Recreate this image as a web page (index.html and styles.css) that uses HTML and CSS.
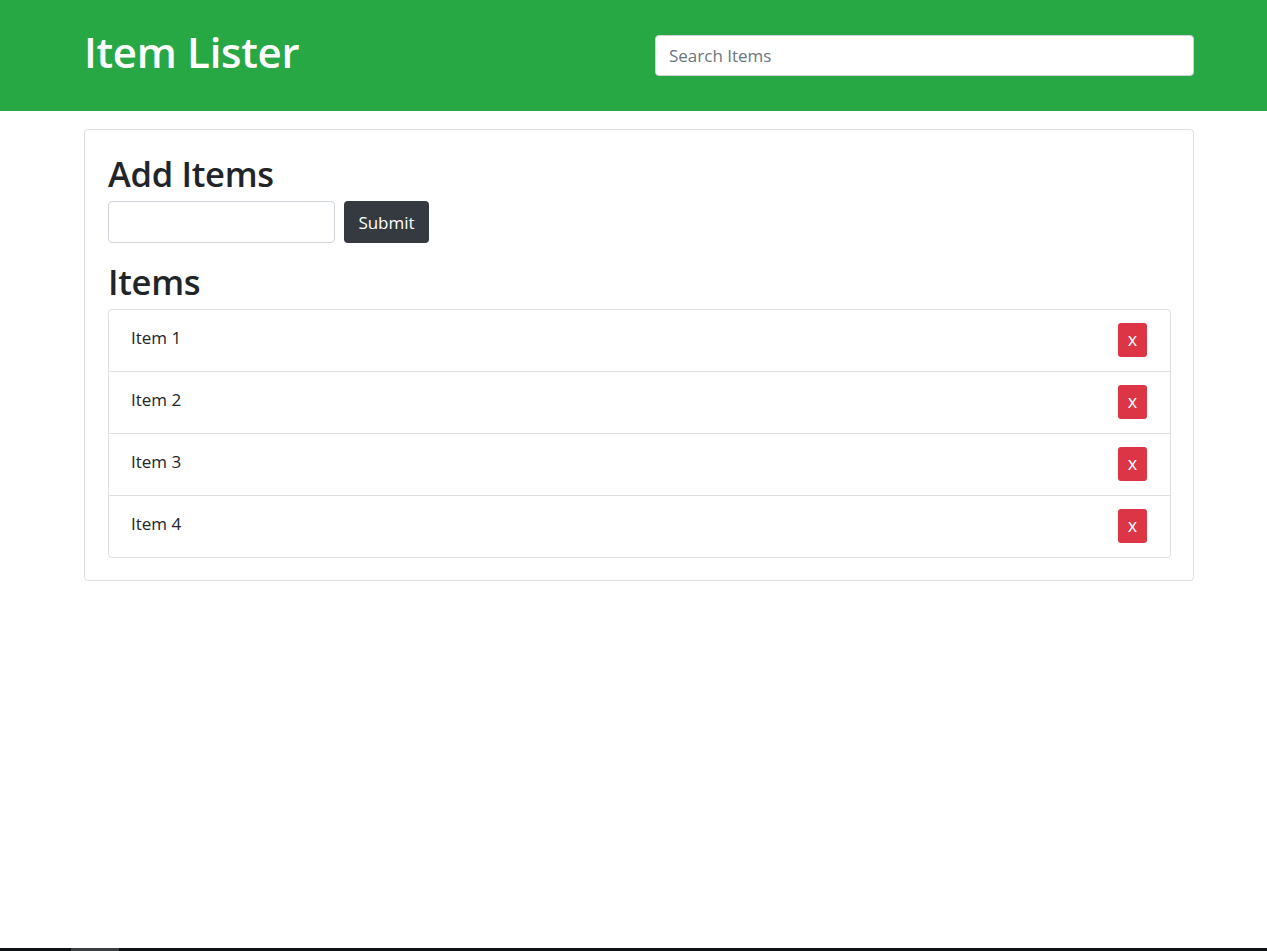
FILE: index.html
```html
<!DOCTYPE html>
<html lang="en">
<head>
<meta charset="utf-8">
<title>Item Lister</title>
<link rel="stylesheet" href="styles.css">
</head>
<body>
<header class="main-header">
  <div class="container header-row">
    <h1 class="title">Item Lister</h1>
    <input class="search" type="text" placeholder="Search Items">
  </div>
</header>
<main class="container">
  <div class="card">
    <h2 class="heading">Add Items</h2>
    <form class="add-form">
      <input class="add-input" type="text">
      <button class="btn-submit" type="button">Submit</button>
    </form>
    <h2 class="heading items-heading">Items</h2>
    <ul class="list">
      <li class="list-item"><span>Item 1</span><button class="btn-del" type="button">x</button></li>
      <li class="list-item"><span>Item 2</span><button class="btn-del" type="button">x</button></li>
      <li class="list-item"><span>Item 3</span><button class="btn-del" type="button">x</button></li>
      <li class="list-item"><span>Item 4</span><button class="btn-del" type="button">x</button></li>
    </ul>
  </div>
</main>
<div class="taskbar"><span class="taskbar-tab"></span></div>
</body>
</html>
```

FILE: styles.css
```css
* { box-sizing: border-box; }
html, body { margin: 0; padding: 0; }
body {
  font-family: "Open Sans", "Noto Sans", sans-serif;
  font-size: 17px;
  color: #212529;
  background: #fff;
}
.container {
  width: 1110px;
  margin-left: 84px;
}
.main-header {
  background: #28a745;
  height: 111px;
  padding-top: 24px;
}
.header-row {
  display: grid;
  grid-template-columns: 1fr 539px;
  align-items: start;
}
.title {
  margin: 0;
  font-size: 42px;
  font-weight: 600;
  line-height: 56px;
  color: #fff;
  letter-spacing: -0.3px;
}
.search {
  margin-top: 11px;
  height: 41px;
  width: 539px;
  border: 1px solid #ced4da;
  border-radius: 4px;
  padding: 0 13px;
  font-family: inherit;
  font-size: 17px;
  color: #495057;
  outline: none;
}
.search::placeholder { color: #6c757d; }
.card {
  margin-top: 18px;
  border: 1px solid rgba(0,0,0,.125);
  border-radius: 4px;
  padding: 23px 22px 22px 23px;
}
.heading {
  margin: 0 0 9px 0;
  padding-top: 2px;
  font-size: 34.5px;
  font-weight: 600;
  line-height: 37px;
  letter-spacing: -0.3px;
}
.add-form {
  display: flex;
  gap: 9px;
}
.add-input {
  width: 227px;
  height: 42px;
  border: 1px solid #ced4da;
  border-radius: 4px;
  outline: none;
}
.btn-submit {
  width: 85px;
  height: 42px;
  border: none;
  border-radius: 4px;
  background: #343a40;
  color: #fff;
  font-family: inherit;
  font-size: 17px;
  padding: 0;
}
.items-heading { margin-top: 18px; }
.list {
  list-style: none;
  margin: 0;
  padding: 0;
  border: 1px solid rgba(0,0,0,.125);
  border-radius: 4px;
}
.list-item {
  display: flex;
  justify-content: space-between;
  align-items: flex-start;
  height: 62px;
  padding: 13px 23px 0 22px;
  border-top: 1px solid rgba(0,0,0,.125);
}
.list-item:first-child { border-top: none; height: 61px; }
.list-item span { margin-top: 3px; }
.btn-del {
  width: 29px;
  height: 34px;
  border: none;
  border-radius: 3px;
  background: #dc3545;
  color: #fff;
  font-family: inherit;
  font-size: 18px;
  padding: 0 0 2px 0;
}
.taskbar {
  position: fixed;
  left: 0;
  right: 0;
  bottom: 0;
  height: 3px;
  background: #0d1114;
}
.taskbar-tab {
  display: block;
  margin-left: 71px;
  width: 48px;
  height: 3px;
  background: #3a3d40;
}
```
